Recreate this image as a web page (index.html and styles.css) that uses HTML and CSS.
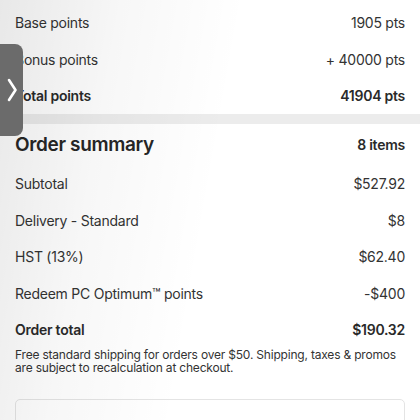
FILE: index.html
```html
<!DOCTYPE html>
<html>
<head>
<meta charset="utf-8">
<link rel="stylesheet" href="styles.css">
</head>
<body>
<div class="page">
  <section class="points">
    <div class="row"><span>Base points</span><span>1905 pts</span></div>
    <div class="row"><span>Bonus points</span><span>+ 40000 pts</span></div>
    <div class="row strong"><span>Total points</span><span>41904 pts</span></div>
  </section>
  <div class="band"></div>
  <section class="summary">
    <div class="head"><h2>Order summary</h2><span>8 items</span></div>
    <div class="row"><span>Subtotal</span><span>$527.92</span></div>
    <div class="row"><span>Delivery - Standard</span><span>$8</span></div>
    <div class="row"><span>HST (13%)</span><span>$62.40</span></div>
    <div class="row"><span>Redeem PC Optimum™ points</span><span>-$400</span></div>
    <div class="row strong"><span>Order total</span><span>$190.32</span></div>
    <p class="note">Free standard shipping for orders over $50. Shipping, taxes &amp; promos are subject to recalculation at checkout.</p>
    <button class="btn">Checkout</button>
  </section>
  <div class="shade"></div>
  <div class="tab">
    <svg width="14" height="26" viewBox="0 0 14 26"><polyline points="4,3 10.5,13 4,23" fill="none" stroke="#fff" stroke-width="2.6" stroke-linecap="round" stroke-linejoin="round"/></svg>
  </div>
</div>
</body>
</html>
```
FILE: styles.css
```css
html, body {
  margin: 0;
  padding: 0;
  background: #fff;
}
body {
  font-family: Inter, "Liberation Sans", sans-serif;
  color: #333;
  font-size: 14px;
  letter-spacing: -0.25px;
}
.page {
  position: relative;
  width: 420px;
  height: 420px;
  overflow: hidden;
}
.points {
  padding: 4.5px 15px 0;
}
.row {
  display: flex;
  justify-content: space-between;
  align-items: center;
  height: 36.4px;
}
.strong {
  font-weight: 600;
  color: #2a2a2a;
}
.band {
  height: 10px;
  background: #ececec;
}
.summary {
  padding: 0 15px;
}
.head {
  display: flex;
  justify-content: space-between;
  align-items: center;
  height: 42px;
}
.head h2 {
  margin: 0;
  font-size: 19px;
  font-weight: 600;
  letter-spacing: -0.35px;
  color: #262626;
}
.head span {
  font-weight: 600;
  color: #2a2a2a;
}
.note {
  margin: 0;
  font-size: 12px;
  line-height: 13.5px;
  letter-spacing: -0.2px;
  color: #333;
}
.btn {
  display: block;
  width: 100%;
  margin-top: 24px;
  height: 58px;
  border: 1px solid #e4e4e4;
  border-radius: 5px;
  background: #fff;
  font-family: inherit;
  font-size: 15px;
  font-weight: 600;
  color: #2b2b2b;
}
.shade {
  position: absolute;
  inset: 0;
  background: linear-gradient(100deg, rgba(0,0,0,0.09) 0%, rgba(0,0,0,0.03) 25%, rgba(0,0,0,0) 50%);
  pointer-events: none;
}
.tab {
  position: absolute;
  left: 0;
  top: 44px;
  width: 23px;
  height: 92px;
  background: #6b6b6b;
  border-radius: 0 8px 8px 0;
  display: flex;
  align-items: center;
  justify-content: center;
}
```
